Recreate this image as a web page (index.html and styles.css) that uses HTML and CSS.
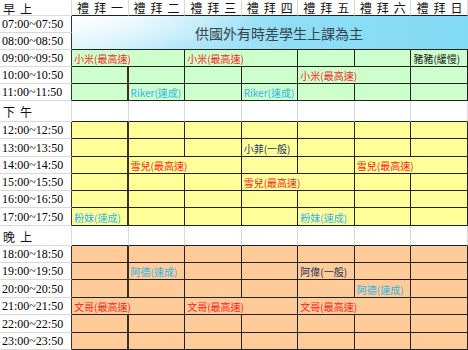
FILE: index.html
```html
<!DOCTYPE html>
<html lang="zh-Hant">
<head>
<meta charset="utf-8">
<title>課表</title>
<link rel="stylesheet" href="styles.css">
</head>
<body>
<div class="sheet">
  <div class="sec hd">早上</div>
  <div class="h">禮拜一</div>
  <div class="h">禮拜二</div>
  <div class="h">禮拜三</div>
  <div class="h">禮拜四</div>
  <div class="h">禮拜五</div>
  <div class="h">禮拜六</div>
  <div class="h">禮拜日</div>

  <div class="t">07:00~07:50</div>
  <div class="banner"><span>供國外有時差學生上課為主</span></div>
  <div class="t">08:00~08:50</div>

  <div class="t">09:00~09:50</div>
  <div class="g s2"><span class="red">小米(最高速)</span></div>
  <div class="g s2"><span class="red">小米(最高速)</span></div>
  <div class="g"></div>
  <div class="g"></div>
  <div class="g"><span class="blk">豬豬(緩慢)</span></div>

  <div class="t">10:00~10:50</div>
  <div class="g c1"></div>
  <div class="g"></div>
  <div class="g"></div>
  <div class="g"></div>
  <div class="g s2"><span class="red">小米(最高速)</span></div>
  <div class="g"></div>

  <div class="t">11:00~11:50</div>
  <div class="g c1"></div>
  <div class="g"><span class="cyan">Riker(速成)</span></div>
  <div class="g"></div>
  <div class="g"><span class="cyan">Riker(速成)</span></div>
  <div class="g"></div>
  <div class="g"></div>
  <div class="g"></div>

  <div class="sec">下午</div>
  <div class="w"></div><div class="w"></div><div class="w"></div><div class="w"></div><div class="w"></div><div class="w"></div><div class="w"></div>

  <div class="t">12:00~12:50</div>
  <div class="y c1"></div><div class="y"></div><div class="y"></div><div class="y"></div><div class="y"></div><div class="y"></div><div class="y"></div>

  <div class="t">13:00~13:50</div>
  <div class="y c1"></div>
  <div class="y"></div>
  <div class="y"></div>
  <div class="y"><span class="navy">小菲(一般)</span></div>
  <div class="y"></div>
  <div class="y"></div>
  <div class="y"></div>

  <div class="t">14:00~14:50</div>
  <div class="y c1"></div>
  <div class="y s2"><span class="red">雪兒(最高速)</span></div>
  <div class="y"></div>
  <div class="y"></div>
  <div class="y s2"><span class="red">雪兒(最高速)</span></div>

  <div class="t">15:00~15:50</div>
  <div class="y c1"></div>
  <div class="y"></div>
  <div class="y"></div>
  <div class="y s2"><span class="red">雪兒(最高速)</span></div>
  <div class="y"></div>
  <div class="y"></div>

  <div class="t">16:00~16:50</div>
  <div class="y c1"></div><div class="y"></div><div class="y"></div><div class="y"></div><div class="y"></div><div class="y"></div><div class="y"></div>

  <div class="t">17:00~17:50</div>
  <div class="y c1"><span class="cyan">粉妹(速成)</span></div>
  <div class="y"></div>
  <div class="y"></div>
  <div class="y"></div>
  <div class="y"><span class="cyan">粉妹(速成)</span></div>
  <div class="y"></div>
  <div class="y"></div>

  <div class="sec">晚上</div>
  <div class="w"></div><div class="w"></div><div class="w"></div><div class="w"></div><div class="w"></div><div class="w"></div><div class="w"></div>

  <div class="t">18:00~18:50</div>
  <div class="o c1"></div><div class="o"></div><div class="o"></div><div class="o"></div><div class="o"></div><div class="o"></div><div class="o"></div>

  <div class="t">19:00~19:50</div>
  <div class="o c1"></div>
  <div class="o"><span class="cyan">阿德(速成)</span></div>
  <div class="o"></div>
  <div class="o"></div>
  <div class="o"><span class="navy">阿偉(一般)</span></div>
  <div class="o"></div>
  <div class="o"></div>

  <div class="t">20:00~20:50</div>
  <div class="o c1"></div>
  <div class="o"></div>
  <div class="o"></div>
  <div class="o"></div>
  <div class="o"></div>
  <div class="o"><span class="cyan">阿德(速成)</span></div>
  <div class="o"></div>

  <div class="t">21:00~21:50</div>
  <div class="o s2"><span class="red">文哥(最高速)</span></div>
  <div class="o s2"><span class="red">文哥(最高速)</span></div>
  <div class="o s2"><span class="red">文哥(最高速)</span></div>
  <div class="o"></div>

  <div class="t">22:00~22:50</div>
  <div class="o c1"></div><div class="o"></div><div class="o"></div><div class="o"></div><div class="o"></div><div class="o"></div><div class="o"></div>

  <div class="t">23:00~23:50</div>
  <div class="o c1"></div><div class="o"></div><div class="o"></div><div class="o"></div><div class="o"></div><div class="o"></div><div class="o"></div>
</div>
</body>
</html>
```

FILE: styles.css
```css
html, body {
  margin: 0;
  padding: 0;
  background: #ffffff;
  overflow: hidden;
}

.sheet {
  width: 468px;
  height: 350px;
  display: grid;
  grid-template-columns: 72px repeat(7, 1fr);
  grid-template-rows:
    16px 17px 17px 17px 17px 17px
    21px 17px 18px 17px 17px 17px 18px
    20px 17px 17px 18px 17px 18px 17px;
  font-family: "Noto Sans CJK TC", "Noto Sans", sans-serif;
}

.sheet > div {
  box-sizing: border-box;
  border-right: 1px solid #d9d9d9;
  border-bottom: 1px solid #d9d9d9;
  display: flex;
  align-items: center;
  white-space: nowrap;
  min-width: 0;
  overflow: visible;
}

.h, .sec {
  font-size: 12px;
  letter-spacing: 5px;
  color: #111;
  padding-left: 4px;
}

.h {
  border-bottom-color: #222 !important;
  padding-left: 5px;
  line-height: 1;
}

.sec {
  padding-left: 3px;
  padding-top: 1px;
}

.t {
  font-family: "Liberation Serif", "Times New Roman", serif;
  font-size: 12px;
  color: #000;
  padding-left: 2px;
  padding-top: 1px;
  border-right-color: #333 !important;
}

.banner {
  grid-column: 2 / 9;
  grid-row: span 2;
  border-right: none !important;
  border-bottom-color: #222 !important;
  border-left: none;
  justify-content: center;
  padding-left: 18px;
  font-size: 14px;
  color: #3a444c;
  background:
    radial-gradient(ellipse 190px 38px at 0 0, rgba(255,255,255,1), rgba(255,255,255,0)),
    linear-gradient(to right, #def4fc 0%, #b4e8f9 28%, #8fdef6 55%, #83daf5 100%);
}

.w {
  border-bottom-color: #222 !important;
}

.g, .y, .o {
  border-right-color: #222 !important;
  border-bottom-color: #222 !important;
  padding-left: 2px;
  padding-top: 1px;
  font-size: 10px;
}

.g { background: #ccffcc; }
.y { background: #ffff99; }
.o { background: #ffcc99; }

.c1 {
  border-right: 2px solid #3a3020 !important;
}

.s2 {
  grid-column: span 2;
}

.red { color: #ff1a1a; }
.cyan { color: #2eb4ea; }
.navy { color: #24325e; }
.blk { color: #222; }
```
